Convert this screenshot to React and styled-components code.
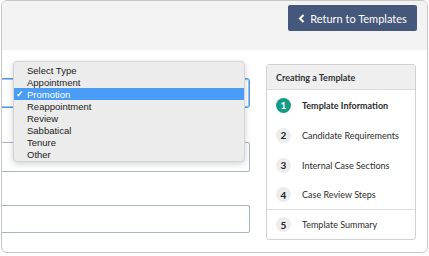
import styled, { createGlobalStyle } from "styled-components";

const GlobalStyle = createGlobalStyle`
  html, body {
    margin: 0;
    padding: 0;
    background: #ffffff;
  }
  body {
    font-family: Lato, "Open Sans", sans-serif;
  }
`;

const types = ["Select Type", "Appointment", "Promotion", "Reappointment", "Review", "Sabbatical", "Tenure", "Other"];

const steps = [
    { n: 1, label: "Template Information", active: true },
    { n: 2, label: "Candidate Requirements" },
    { n: 3, label: "Internal Case Sections" },
    { n: 4, label: "Case Review Steps", short: true },
    { n: 5, label: "Template Summary", split: true },
];

export default function App() {
    return (
        <>
            <GlobalStyle />
            <Window>
                <Header>
                    <BackButton>
                        <svg width="7" height="9" viewBox="0 0 7 9">
                            <path d="M5.5 1 L2 4.5 L5.5 8" fill="none" stroke="#fff" strokeWidth="2" />
                        </svg>
                        Return to Templates
                    </BackButton>
                </Header>
                <Body>
                    <Form>
                        <SelectBox />
                        <Field $top={34} />
                        <Field $top={33} $height={28} />
                    </Form>
                    <Sidebar>
                        <SidebarTitle>Creating a Template</SidebarTitle>
                        {steps.map((s) => (
                            <Step key={s.n} $split={s.split} $short={s.short || s.split}>
                                <StepNumber $active={s.active}>{s.n}</StepNumber>
                                <StepLabel $active={s.active}>{s.label}</StepLabel>
                            </Step>
                        ))}
                    </Sidebar>
                </Body>
                <Menu>
                    {types.map((t) => (
                        <MenuItem key={t} $selected={t === "Promotion"}>
                            <Check>{t === "Promotion" ? "✓" : ""}</Check>
                            {t}
                        </MenuItem>
                    ))}
                </Menu>
            </Window>
        </>
    );
}

const Window = styled.div`
  position: relative;
  margin-left: 1px;
  width: 427px;
  height: 253px;
  box-sizing: border-box;
  border: 1px solid #c6c6c6;
  border-radius: 6px;
  overflow: hidden;
  background: #ffffff;
`;

const Header = styled.div`
  height: 49px;
  background: #f3f3f3;
  display: flex;
  justify-content: flex-end;
  align-items: flex-start;
  padding: 4px 10px 0 0;
  box-sizing: border-box;
`;

const BackButton = styled.div`
  width: 129px;
  height: 26px;
  background: #45577a;
  border-radius: 2px;
  color: #ffffff;
  font-family: Lato, sans-serif;
  font-size: 11px;
  display: flex;
  align-items: center;
  justify-content: center;
  gap: 5px;
  box-sizing: border-box;
`;

const Body = styled.div`
  display: flex;
  gap: 16px;
  padding: 14px 10px 0 0;
`;

const Form = styled.div`
  width: 248px;
  display: flex;
  flex-direction: column;
  padding-top: 14px;
`;

const SelectBox = styled.div`
  margin-left: -10px;
  height: 30px;
  box-sizing: border-box;
  border: 1px solid #4f97e3;
  border-radius: 3px;
  box-shadow: 0 0 0 1px #9cc6f2 inset;
`;

const Field = styled.div`
  margin-left: -10px;
  margin-top: ${(p) => p.$top}px;
  height: ${(p) => p.$height || 30}px;
  box-sizing: border-box;
  border: 1px solid #a8b3c5;
  border-radius: 2px;
`;

const Sidebar = styled.div`
  width: 150px;
  height: 176px;
  box-sizing: border-box;
  border: 1px solid #d2d2d2;
  border-radius: 3px;
  overflow: hidden;
  font-family: Lato, sans-serif;
`;

const SidebarTitle = styled.div`
  height: 24px;
  background: #efefef;
  border-bottom: 1px solid #dcdcdc;
  padding-left: 9px;
  display: flex;
  align-items: center;
  font-size: 9px;
  font-weight: 700;
  color: #333333;
`;

const Step = styled.div`
  height: ${(p) => (p.$short ? 29 : 30)}px;
  display: flex;
  align-items: center;
  gap: 11px;
  padding-left: 9px;
  border-top: ${(p) => (p.$split ? "1px solid #dcdcdc" : "none")};
`;

const StepNumber = styled.div`
  width: 15px;
  height: 15px;
  border-radius: 50%;
  background: ${(p) => (p.$active ? "#159b86" : "#ececec")};
  color: ${(p) => (p.$active ? "#ffffff" : "#222222")};
  font-size: 10px;
  font-weight: 700;
  display: flex;
  align-items: center;
  justify-content: center;
`;

const StepLabel = styled.div`
  font-size: 9px;
  font-weight: ${(p) => (p.$active ? 700 : 400)};
  color: #2b2b2b;
`;

const Menu = styled.div`
  position: absolute;
  left: 11px;
  top: 60px;
  width: 232px;
  height: 101px;
  box-sizing: border-box;
  padding-top: 2px;
  background: #ececec;
  border: 1px solid #d4d4d4;
  border-radius: 4px;
  box-shadow: 0 2px 6px rgba(0, 0, 0, 0.18);
`;

const MenuItem = styled.div`
  height: 12px;
  display: flex;
  align-items: center;
  font-family: "Liberation Sans", Arial, sans-serif;
  font-size: 9.5px;
  color: ${(p) => (p.$selected ? "#ffffff" : "#222222")};
  background: ${(p) => (p.$selected ? "#4a9cf6" : "transparent")};
`;

const Check = styled.span`
  width: 13px;
  padding-left: 2px;
  box-sizing: border-box;
  font-size: 9px;
  font-weight: 700;
`;
